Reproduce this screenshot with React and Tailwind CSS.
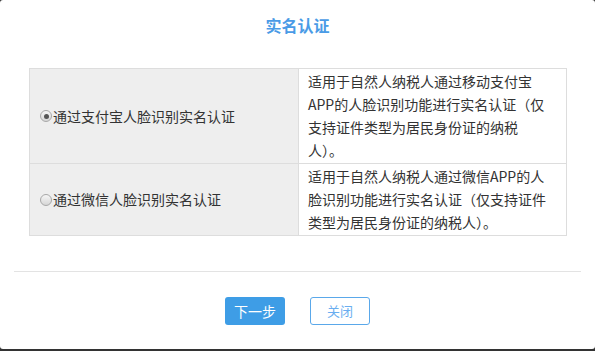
import React from "react";

const rows = [
  {
    label: "通过支付宝人脸识别实名认证",
    desc: "适用于自然人纳税人通过移动支付宝APP的人脸识别功能进行实名认证（仅支持证件类型为居民身份证的纳税人）。",
    checked: true,
  },
  {
    label: "通过微信人脸识别实名认证",
    desc: "适用于自然人纳税人通过微信APP的人脸识别功能进行实名认证（仅支持证件类型为居民身份证的纳税人）。",
    checked: false,
  },
];

const Radio = ({ checked }) => (
  <span className="w-[12px] h-[12px] rounded-full border border-[#a8a8a8] bg-gradient-to-b from-[#f6f6f6] to-[#d6d6d6] flex items-center justify-center shrink-0">
    {checked && <span className="w-[5px] h-[5px] rounded-full bg-[#555]"></span>}
  </span>
);

const App = () => {
  return (
    <div
      className="w-[595px] h-[351px] bg-[#333] overflow-hidden"
      style={{ fontFamily: '"Microsoft YaHei", "Noto Sans CJK SC", "Noto Sans", sans-serif' }}
    >
      <div className="h-[349px] bg-white rounded-[3px] flex flex-col">
        <div className="h-[50px] flex items-center justify-center text-[16px] font-bold text-[#4a9be6]">
          实名认证
        </div>
        <div className="pt-[18px] px-[29px]">
          <table className="w-[538px] border-collapse text-[14px] text-[#333]">
            <tbody>
              {rows.map((r, i) => (
                <tr key={i}>
                  <td className="w-[269px] bg-[#eee] border border-[#ddd] pl-[10px]">
                    <label className="flex items-center gap-[1px]">
                      <Radio checked={r.checked} />
                      <span>{r.label}</span>
                    </label>
                  </td>
                  <td className="border border-[#ddd] px-[9px] py-[1px] leading-[23px] align-top">
                    <div className="w-[242px]">{r.desc}</div>
                  </td>
                </tr>
              ))}
            </tbody>
          </table>
        </div>
        <div className="mt-[35px] mx-[14px] h-px bg-[#e3e3e3]"></div>
        <div className="mt-[25px] flex justify-center gap-[25px]">
          <button className="w-[60px] h-[28px] rounded-[3px] bg-[#3e9de6] text-white text-[14px]">
            下一步
          </button>
          <button className="w-[60px] h-[28px] rounded-[3px] border border-[#5aa8ea] bg-white text-[#6aaef0] text-[13px]">
            关闭
          </button>
        </div>
      </div>
    </div>
  );
};

export default App;
